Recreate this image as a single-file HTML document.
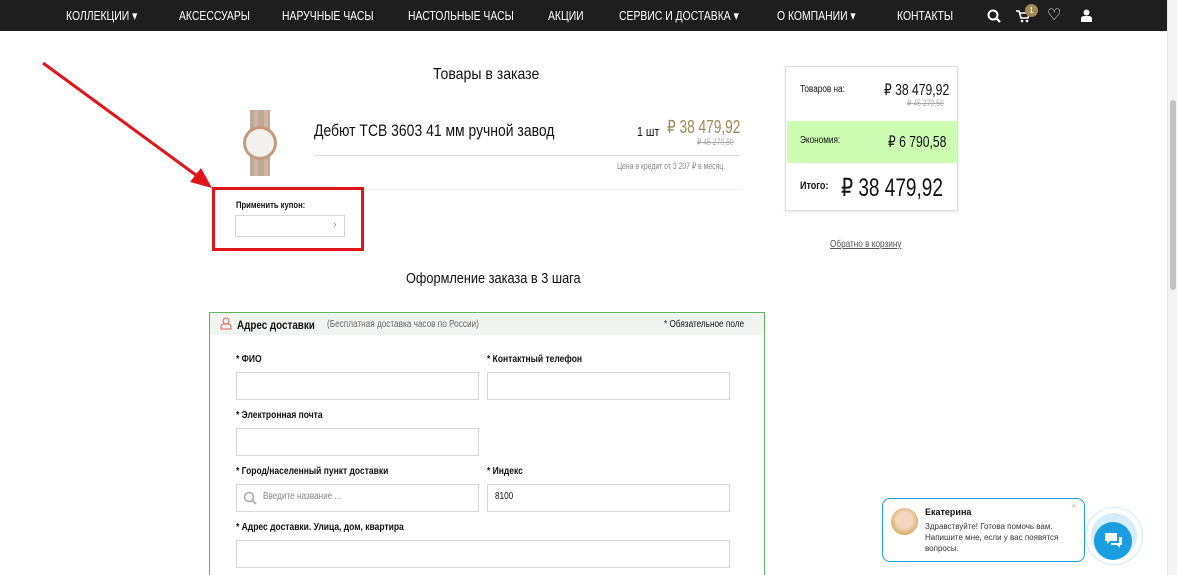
<!DOCTYPE html>
<html><head><meta charset="utf-8"><style>
*{box-sizing:border-box;margin:0;padding:0}
body{width:1177px;height:575px;overflow:hidden;background:#fff;font-family:"Liberation Sans",sans-serif;color:#111;position:relative}
.abs{position:absolute}
.c{transform:scaleX(.82);transform-origin:0 0;white-space:nowrap}
.m{transform:scaleX(.76);transform-origin:0 0;white-space:nowrap}
.nav{left:0;top:0;width:1167px;height:31px;background:#1d1e1d;color:#fff;font-size:13px}
.nav span{position:absolute;top:8px;white-space:nowrap;transform:scaleX(.8);transform-origin:0 0}
.sb{left:1167px;top:0;width:10px;height:575px;background:#f4f4f4;border-left:1px solid #e6e6e6}
.sb div{position:absolute;left:2px;top:100px;width:6px;height:190px;background:#c2c2c2;border-radius:3px}
.lbl{font-size:10px;font-weight:bold;transform:scaleX(.85);transform-origin:0 0;white-space:nowrap}
.inp{border:1px solid #d6d6d6;background:#fff;height:27px}
.gold{color:#a2885a}
</style></head><body>
<div class="abs nav">
<span style="left:66px">КОЛЛЕКЦИИ ▾</span>
<span style="left:179px">АКСЕССУАРЫ</span>
<span style="left:282px">НАРУЧНЫЕ ЧАСЫ</span>
<span style="left:408px">НАСТОЛЬНЫЕ ЧАСЫ</span>
<span style="left:548px">АКЦИИ</span>
<span style="left:619px">СЕРВИС И ДОСТАВКА ▾</span>
<span style="left:777px">О КОМПАНИИ ▾</span>
<span style="left:897px">КОНТАКТЫ</span>
<svg class="abs" style="left:987px;top:9px" width="14" height="14"><circle cx="6" cy="6" r="4.5" stroke="#fff" stroke-width="2" fill="none"/><path d="M9 9l4 4" stroke="#fff" stroke-width="2.2"/></svg>
<svg class="abs" style="left:1016px;top:10px" width="14" height="13"><path d="M0 1h3l2 7h7l1-5H4" stroke="#fff" stroke-width="1.6" fill="none"/><circle cx="6" cy="11" r="1.3" fill="#fff"/><circle cx="11" cy="11" r="1.3" fill="#fff"/></svg>
<div class="abs" style="left:1025px;top:4px;width:13px;height:13px;border-radius:50%;background:#a38a54;font-size:8px;text-align:center;line-height:13px">1</div>
<div class="abs" style="left:1047px;top:5px;font-size:16px">♡</div>
<svg class="abs" style="left:1081px;top:9px" width="11" height="13"><circle cx="5.5" cy="3.5" r="3" fill="#fff"/><path d="M0 13v-3q0-3 3-3h5q3 0 3 3v3z" fill="#fff"/></svg>
</div>
<div class="abs sb"><div></div></div>

<div class="abs c" style="left:433px;top:66px;font-size:16px;transform:scaleX(.88)">Товары в заказе</div>
<svg class="abs" style="left:240px;top:110px" width="42" height="66"><rect x="10" y="0" width="20" height="66" fill="#b8aaa0"/><rect x="14" y="0" width="4" height="66" fill="#d6b39a"/><rect x="24" y="0" width="4" height="66" fill="#d6b39a"/><circle cx="20" cy="33" r="17" fill="#c49a7a"/><circle cx="20" cy="33" r="14" fill="#f3f1ee"/></svg>
<div class="abs c" style="left:314px;top:121px;font-size:17px">Дебют TCB 3603 41 мм ручной завод</div>
<div class="abs c" style="left:637px;top:124px;font-size:13px">1 шт</div>
<div class="abs gold m" style="left:667px;top:117px;font-size:18px">₽ 38 479,92</div>
<div class="abs m" style="left:697px;top:137px;font-size:9px;color:#aaa;text-decoration:line-through">₽ 45 270,50</div>
<div class="abs" style="left:314px;top:155px;width:426px;height:1px;background:#ddd"></div>
<div class="abs m" style="left:617px;top:161px;font-size:9px;color:#888">Цена в кредит от 3 207 ₽ в месяц.</div>
<div class="abs" style="left:210px;top:189px;width:530px;height:1px;background:#eee"></div>
<div class="abs lbl" style="left:236px;top:200px;font-size:9px">Применить купон:</div>
<div class="abs inp" style="left:235px;top:215px;width:110px;height:22px;font-size:11px;color:#999;padding:3px 0 0 97px">›</div>
<div class="abs" style="left:212px;top:187px;width:152px;height:64px;border:3px solid #e0141a"></div>
<svg class="abs" style="left:0;top:0" width="230" height="200"><path d="M43 63L200 178" stroke="#e0141a" stroke-width="3"/><path d="M212 188L190 182L201 168z" fill="#e0141a"/></svg>

<div class="abs c" style="left:406px;top:270px;font-size:15px;transform:scaleX(.85)">Оформление заказа в 3 шага</div>

<div class="abs" style="left:785px;top:66px;width:173px;height:145px;border:1px solid #ddd;box-shadow:0 1px 3px rgba(0,0,0,.1)">
<div class="abs c" style="left:14px;top:17px;font-size:10px">Товаров на:</div>
<div class="abs m" style="left:98px;top:13px;font-size:16px">₽ 38 479,92</div>
<div class="abs m" style="left:121px;top:31px;font-size:9px;color:#aaa;text-decoration:line-through">₽ 45 270,50</div>
<div class="abs" style="left:1px;top:54px;width:170px;height:42px;background:#ccfdb2"></div>
<div class="abs c" style="left:14px;top:68px;font-size:10px">Экономия:</div>
<div class="abs m" style="left:102px;top:65px;font-size:16px">₽ 6 790,58</div>
<div class="abs c" style="left:14px;top:113px;font-size:11px;font-weight:bold">Итого:</div>
<div class="abs m" style="left:55px;top:106px;font-size:25px">₽ 38 479,92</div>
</div>
<div class="abs c" style="left:830px;top:239px;font-size:10px;color:#555;text-decoration:underline">Обратно в корзину</div>

<div class="abs" style="left:209px;top:312px;width:556px;height:263px;border:1px solid #5cb85c;border-bottom:none">
<div style="height:22px;background:#f1f5f2"></div>
<svg class="abs" style="left:10px;top:4px" width="12" height="13"><circle cx="6" cy="4" r="3" stroke="#e06050" fill="none"/><path d="M1 12v-2q0-3 3-3h4q3 0 3 3v2z" stroke="#e06050" fill="none"/></svg>
<div class="abs c" style="left:27px;top:5px;font-size:12px;font-weight:bold">Адрес доставки</div>
<div class="abs c" style="left:117px;top:6px;font-size:10px;color:#666">(Бесплатная доставка часов по России)</div>
<div class="abs c" style="left:454px;top:6px;font-size:10px">* Обязательное поле</div>
<div class="abs lbl" style="left:26px;top:41px">* ФИО</div>
<div class="abs lbl" style="left:277px;top:41px">* Контактный телефон</div>
<div class="abs inp" style="left:26px;top:59px;width:243px;height:28px"></div>
<div class="abs inp" style="left:277px;top:59px;width:243px;height:28px"></div>
<div class="abs lbl" style="left:26px;top:97px">* Электронная почта</div>
<div class="abs inp" style="left:26px;top:115px;width:243px;height:28px"></div>
<div class="abs lbl" style="left:26px;top:153px">* Город/населенный пункт доставки</div>
<div class="abs lbl" style="left:277px;top:153px">* Индекс</div>
<div class="abs inp" style="left:26px;top:171px;width:243px;height:28px"></div>
<div class="abs c" style="left:53px;top:178px;font-size:10px;color:#888">Введите название ...</div>
<svg class="abs" style="left:33px;top:178px" width="14" height="14"><circle cx="6" cy="6" r="4.5" stroke="#aaa" stroke-width="1.5" fill="none"/><path d="M9 9l4 4" stroke="#aaa" stroke-width="1.8"/></svg>
<div class="abs inp" style="left:277px;top:171px;width:243px;height:28px"></div>
<div class="abs c" style="left:285px;top:178px;font-size:10px">8100</div>
<div class="abs lbl" style="left:26px;top:209px">* Адрес доставки. Улица, дом, квартира</div>
<div class="abs inp" style="left:26px;top:227px;width:494px;height:28px"></div>
</div>

<div class="abs" style="left:1085px;top:507px;width:58px;height:58px;border-radius:50%;border:1px solid #cfe9f7"></div>
<div class="abs" style="left:1091px;top:513px;width:46px;height:46px;border-radius:50%;background:#d5ecf9"></div>
<div class="abs" style="left:1094px;top:522px;width:38px;height:38px;border-radius:50%;background:#1a9ee0"></div>
<svg class="abs" style="left:1104px;top:532px" width="20" height="18"><path d="M1 1h12v8H6l-3 3V9H1z" fill="#fff"/><path d="M15 5h3v8h-2v3l-3-3H7v-2h8z" fill="#fff"/></svg>
<div class="abs" style="left:882px;top:498px;width:203px;height:64px;border:1.5px solid #1a9ee0;border-radius:8px;background:#fff">
<div class="abs" style="left:8px;top:9px;width:27px;height:27px;border-radius:50%;background:radial-gradient(circle at 50% 45%,#f3d6bd 40%,#d7b06a 70%)"></div>
<div class="abs" style="left:42px;top:8px;font-size:9px;font-weight:bold">Екатерина</div>
<div class="abs" style="left:42px;top:22px;width:155px;font-size:8px;line-height:11px;color:#333">Здравствуйте! Готова помочь вам. Напишите мне, если у вас появятся вопросы.</div>
<div class="abs" style="left:188px;top:2px;font-size:9px;color:#bbb">×</div>
</div>
</body></html>
